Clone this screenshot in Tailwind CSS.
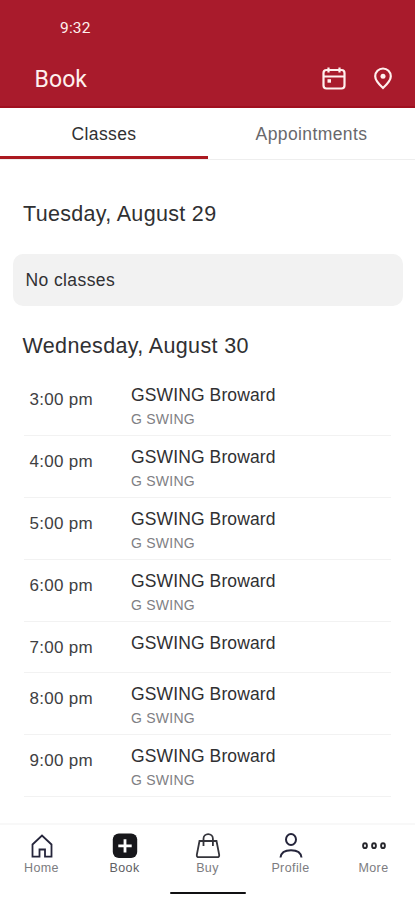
<!DOCTYPE html>
<html lang="en">
<head>
<meta charset="utf-8">
<meta name="viewport" content="width=device-width, initial-scale=1">
<title>Book</title>
<script src="https://cdn.jsdelivr.net/npm/@tailwindcss/browser@4"></script>
</head>
<body class="bg-white">
<div class="flex h-[900px] w-[415px] flex-col overflow-hidden bg-white font-['Liberation_Sans',Arial,sans-serif] text-[#303032]">
  <header class="flex h-[108px] shrink-0 flex-col border-b-2 border-[#a01020] bg-[#a91b2c] font-[Roboto,sans-serif] text-[#fff0ee]">
    <div class="h-[50px] pt-[18px] pl-[60px] text-[15.5px] leading-5 tracking-[.2px]">9:32</div>
    <div class="flex h-[56px] items-center pt-[2px] pl-[34.5px]">
      <h1 class="flex-1 pt-px text-[23px] leading-7 tracking-[.1px]">Book</h1>
      <svg class="mr-[25px] h-6 w-6" viewBox="0 0 24 24" fill="none" stroke="currentColor" stroke-width="2.200"><rect x="1.500" y="3" width="21" height="18.500" rx="3"/><path d="M2 9.500h20M6.500 .5v5M17.500 .5v5"/><path d="M5.500 12.200h3.500v3.500H5.500z" fill="currentColor" stroke="none"/></svg>
      <svg class="mr-[20px] h-6 w-6" viewBox="0 0 24 24" fill="none" stroke="currentColor" stroke-width="2.200"><path d="M12 21C9 18.300 4.200 13.500 4.200 9.300a7.800 7.800 0 0 1 15.600 0c0 4.200-4.800 9-7.800 11.700z"/><circle cx="12" cy="9.300" r="2.500" fill="currentColor" stroke="none"/></svg>
    </div>
  </header>
  <nav class="flex h-[52px] shrink-0 border-b border-[#eeeeee] text-[17.5px] tracking-[.4px]">
    <div class="flex h-[51px] w-[208px] items-center justify-center border-b-3 border-[#ab1920] pt-[5px]">Classes</div>
    <div class="flex flex-1 items-center justify-center pt-px text-[#68686c]">Appointments</div>
  </nav>
  <main class="flex h-[663px] shrink-0 flex-col">
    <h2 class="mt-[40px] pl-[23px] text-[21.5px] leading-7 tracking-[.32px]">Tuesday, August 29</h2>
    <div class="mr-[12px] ml-[13px] mt-[26px] flex h-[52px] items-center rounded-[10px] bg-[#f2f2f2] pl-[12.5px] text-[17.5px] tracking-[.4px]">No classes</div>
    <h2 class="mt-[26px] pl-[22.5px] text-[21.5px] leading-7 tracking-[.36px]">Wednesday, August 30</h2>
    <div id="list" class="mt-[14px] flex flex-col px-[24px]"></div>
  </main>
  <footer class="flex h-[77px] shrink-0 flex-col border-t-2 border-[#f8f8f8] text-[12.5px] tracking-[.4px] text-[#7c7c80]">
    <div class="grid h-[62px] grid-cols-5 pt-[8px]">
      <div class="flex flex-col items-center"><svg class="h-[26px] w-[26px] text-[#25253b]" viewBox="0 0 26 26" fill="none" stroke="currentColor" stroke-width="1.800"><path d="M3.500 11.500L13 2.500l9.500 9v12.200H16v-7.200h-5.500v7.200h-7z"/></svg><span class="mt-px leading-4">Home</span></div>
      <div class="flex flex-col items-center"><svg class="h-[26px] w-[26px]" viewBox="0 0 26 26"><rect x=".8" y=".6" width="24.400" height="24.400" rx="6" fill="#17171b"/><path d="M13 6.200v13.400M6.300 12.900h13.400" stroke="#fff" stroke-width="2.800"/></svg><span class="mt-px leading-4 text-[#606064]">Book</span></div>
      <div class="flex flex-col items-center"><svg class="h-[26px] w-[26px] text-[#34343b]" viewBox="0 0 26 26" fill="none" stroke="currentColor" stroke-width="1.800"><path d="M4.500 8h17l2.700 13.800q.2 2.400-2 2.400H3.800q-2.200 0-2-2.400z"/><path d="M8.500 13V5.700a4.700 4.500 0 0 1 9.400 0V13"/></svg><span class="mt-px leading-4">Buy</span></div>
      <div class="flex flex-col items-center"><svg class="h-[26px] w-[26px] text-[#25253b]" viewBox="0 0 26 26" fill="none" stroke="currentColor" stroke-width="2"><ellipse cx="13" cy="6.500" rx="5" ry="5.500"/><path d="M2.500 24.500c.5-4.600 4-7.300 10.500-7.300s10 2.700 10.500 7.300"/></svg><span class="mt-px leading-4">Profile</span></div>
      <div class="flex flex-col items-center"><svg class="h-[26px] w-[26px] text-[#25252b]" viewBox="0 0 26 26" fill="none" stroke="currentColor" stroke-width="1.900"><ellipse cx="4" cy="12.700" rx="1.900" ry="2.400"/><ellipse cx="13" cy="12.700" rx="1.900" ry="2.400"/><ellipse cx="22" cy="12.700" rx="1.900" ry="2.400"/></svg><span class="mt-px leading-4">More</span></div>
    </div>
    <div class="mx-auto mt-[5px] h-[2px] w-[76px] rounded-full bg-[#101012]"></div>
  </footer>
</div>
<script>
  const classes = [["3:00 pm", 1], ["4:00 pm", 1], ["5:00 pm", 1], ["6:00 pm", 1], ["7:00 pm", 0], ["8:00 pm", 1], ["9:00 pm", 1]];
  document.getElementById("list").innerHTML = classes.map(([time, loc]) => `
    <div class="flex border-b border-[#f2f2f2] pl-[5px] ${loc ? "h-[62px]" : "h-[51px]"}">
      <div class="w-[102px] pt-[16px] pl-[.5px] text-[17px] leading-5 tracking-[.3px] text-[#404042]">${time}</div>
      <div class="pt-[11px]">
        <div class="text-[17.5px] leading-5 tracking-[.12px]">GSWING Broward</div>
        ${loc ? '<div class="mt-[6px] text-[14px] leading-4 tracking-[.25px] text-[#808084]">G SWING</div>' : ""}
      </div>
    </div>`).join("");
</script>
</body>
</html>
